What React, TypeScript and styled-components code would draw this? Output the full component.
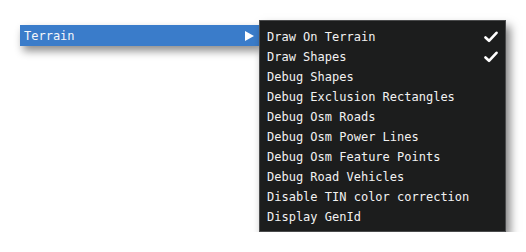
import styled, { createGlobalStyle } from "styled-components";

const GlobalStyle = createGlobalStyle`
	html, body {
		margin: 0;
		padding: 0;
		background: #ffffff;
	}
	body {
		font-family: "DejaVu Sans Mono", "Liberation Mono", monospace;
	}
`;

const Stage = styled.div`
	display: flex;
	align-items: flex-start;
	padding: 20px 0 0 20px;
`;

const ParentItem = styled.div`
	display: flex;
	align-items: center;
	justify-content: space-between;
	width: 239px;
	height: 21px;
	margin-top: 5px;
	padding: 0 5px 0 4px;
	box-sizing: border-box;
	background: #3a7cca;
	color: #f4f6fa;
	font-size: 12px;
	box-shadow: 3px 5px 8px rgba(0, 0, 0, 0.45);
`;

const Arrow = styled.span`
	width: 0;
	height: 0;
	border-top: 5.5px solid transparent;
	border-bottom: 5.5px solid transparent;
	border-left: 9px solid #ffffff;
`;

const SubMenu = styled.div`
	width: 247px;
	box-sizing: border-box;
	padding: 6px 0 4px;
	background: #1c1d1d;
	border: 1px solid #4a4b4c;
	box-shadow: 4px 6px 9px rgba(0, 0, 0, 0.5);
`;

const MenuRow = styled.div`
	display: flex;
	align-items: center;
	justify-content: space-between;
	height: 20px;
	padding: 0 7px 0 7px;
	color: #f2f2f2;
	font-size: 12px;
	white-space: pre;
`;

const Check = () => (
	<svg width="14" height="12" viewBox="0 0 14 12">
		<path
			d="M1.5 6.5 L5 9.8 L12.5 1.8"
			fill="none"
			stroke="#ffffff"
			strokeWidth="2.6"
			strokeLinecap="round"
			strokeLinejoin="round"
		/>
	</svg>
);

const items: { label: string; checked?: boolean }[] = [
	{ label: "Draw On Terrain", checked: true },
	{ label: "Draw Shapes", checked: true },
	{ label: "Debug Shapes" },
	{ label: "Debug Exclusion Rectangles" },
	{ label: "Debug Osm Roads" },
	{ label: "Debug Osm Power Lines" },
	{ label: "Debug Osm Feature Points" },
	{ label: "Debug Road Vehicles" },
	{ label: "Disable TIN color correction" },
	{ label: "Display GenId" },
];

export default function App() {
	return (
		<>
			<GlobalStyle />
			<Stage>
				<ParentItem>
					<span>Terrain</span>
					<Arrow />
				</ParentItem>
				<SubMenu>
					{items.map((item) => (
						<MenuRow key={item.label}>
							<span>{item.label}</span>
							{item.checked && <Check />}
						</MenuRow>
					))}
				</SubMenu>
			</Stage>
		</>
	);
}
